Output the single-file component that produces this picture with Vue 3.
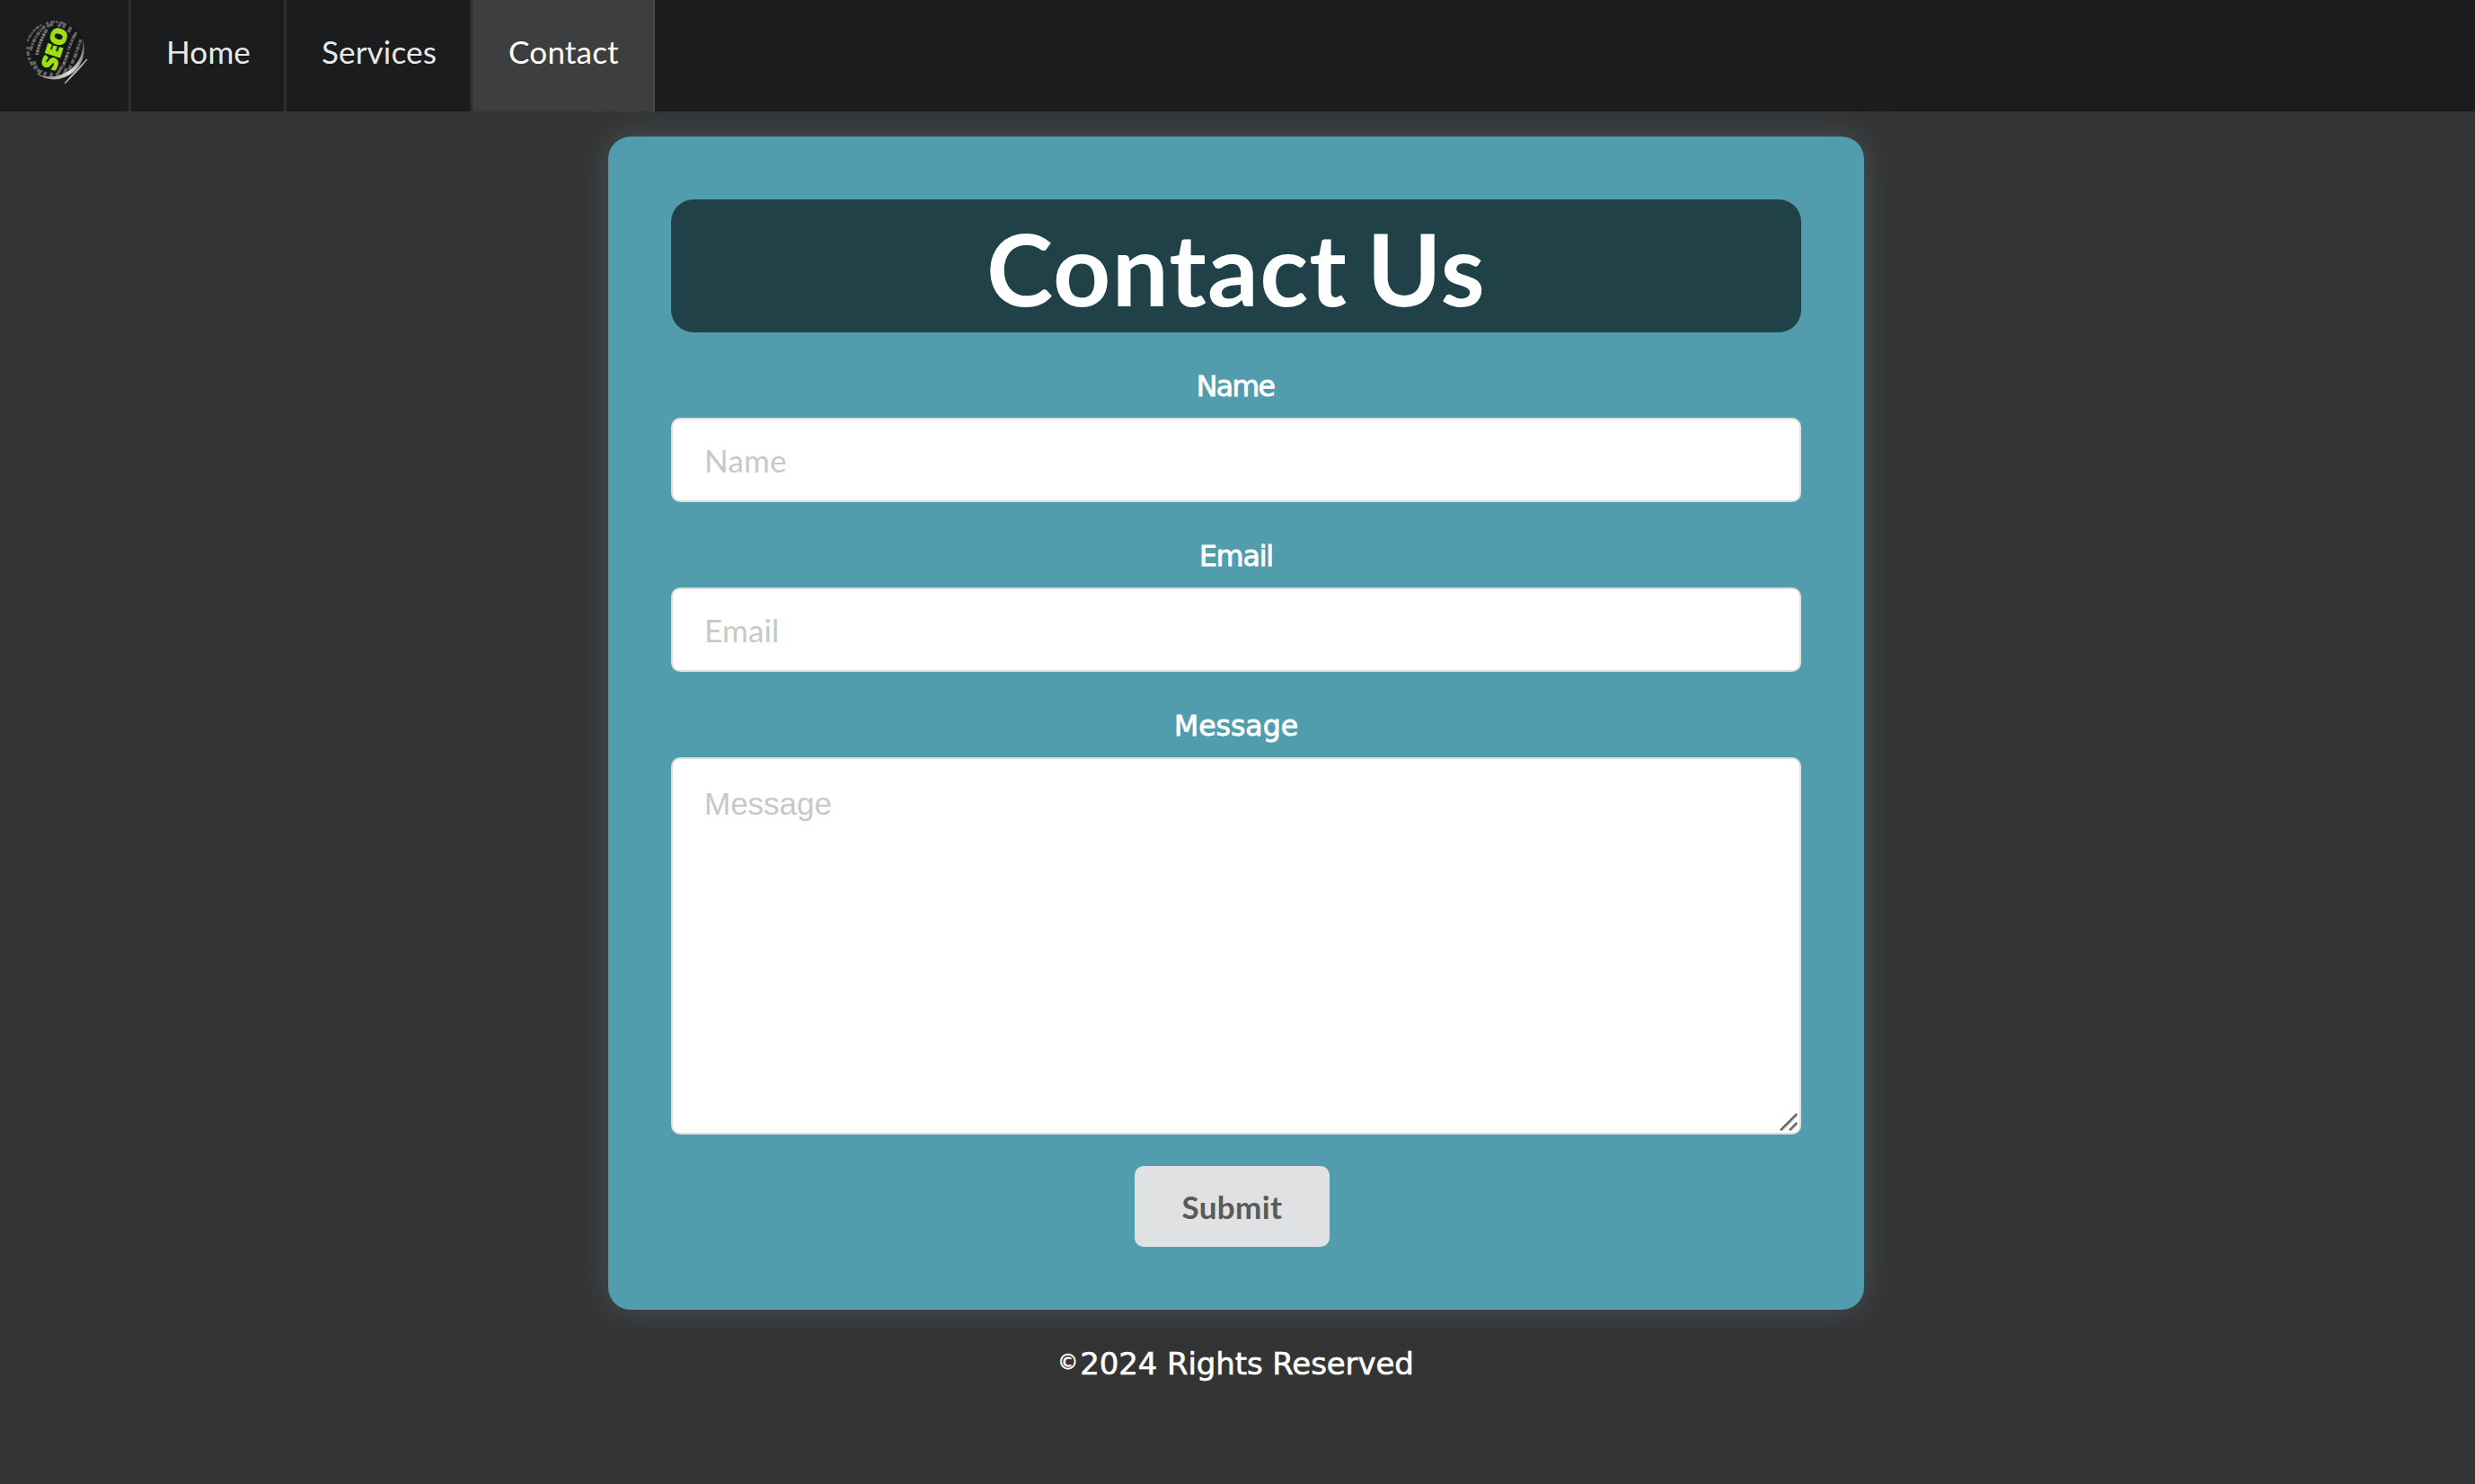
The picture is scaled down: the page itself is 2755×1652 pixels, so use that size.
<script setup>
import { ref } from 'vue'

const links = ['Home', 'Services', 'Contact']
const active = ref('Contact')
const name = ref('')
const email = ref('')
const message = ref('')
</script>

<template>
  <div class="page">
    <nav class="menu">
      <a class="brand">
        <svg width="76" height="76" viewBox="0 0 76 76" aria-label="SEO">
          <defs>
            <linearGradient id="rim" x1="0" y1="1" x2="1" y2="0.2">
              <stop offset="0" stop-color="#777" />
              <stop offset="0.5" stop-color="#ddd" />
              <stop offset="1" stop-color="#777" />
            </linearGradient>
            <clipPath id="globe"><circle cx="36" cy="34" r="33" /></clipPath>
          </defs>
          <g clip-path="url(#globe)">
            <circle cx="36" cy="34" r="33" fill="#17181a" />
            <g fill="none" stroke="#8b8b8b" stroke-width="3.4" opacity="0.65">
              <path d="M5 24Q10 12 21 5" stroke-dasharray="3 1 5 1 2 1" />
              <path d="M9 34Q13 18 25 7" stroke-dasharray="5 1 2 1" />
              <path d="M16 39Q19 24 27 11" stroke-dasharray="2 .7 3 .8" stroke="#b5b5b5" />
              <path d="M6 30Q5 45 15 55" stroke-dasharray="3 2 5 2" />
              <path d="M13 46Q14 53 19 58" stroke-dasharray="4 1" />
              <path d="M26 4Q36 0 47 4" stroke-dasharray="3 2 5 1" />
              <path d="M27 7L34 5M43 3L40 8M48 4L45 9M54 8L51 14M60 14L56 21" />
              <path d="M57 18L51 34" stroke-dasharray="3 1" />
              <path d="M65 22L58 42" stroke-dasharray="4 1 2 1" />
              <path d="M51 36L45 52" stroke-dasharray="2 1 4 1" stroke="#aaa" />
              <path d="M60 38L51 57" stroke-dasharray="5 2" />
              <path d="M44 52L38 62M21 56L18 61M26 58L24 63M33 59L31 64M49 54L46 61" />
            </g>
          </g>
          <path d="M15 60Q34 68 51 57Q69 45 67 22Q73 43 57 58Q37 74 15 60Z" fill="url(#rim)" />
          <path d="M47 71Q56 57 72 44Q61 60 47 71Z" fill="#7c7d7e" />
          <path d="M47 71L72 44" stroke="#bbb" stroke-width="1.2" />
          <text class="logo-text" transform="translate(36.5 57.5) rotate(-72)" textLength="48" lengthAdjust="spacingAndGlyphs">SEO</text>
        </svg>
      </a>
      <a
        v-for="link in links"
        :key="link"
        class="item"
        :class="[link.toLowerCase(), { active: link === active }]"
        @click="active = link"
      >{{ link }}</a>
    </nav>

    <form class="card" @submit.prevent>
      <h1>Contact Us</h1>
      <label class="l-name" for="name">Name</label>
      <input id="name" v-model="name" type="text" placeholder="Name">
      <label class="l-email" for="email">Email</label>
      <input id="email" v-model="email" type="email" placeholder="Email">
      <label class="l-message" for="message">Message</label>
      <div class="area">
        <textarea id="message" v-model="message" placeholder="Message"></textarea>
        <svg class="grip" width="22" height="22" viewBox="0 0 22 22">
          <path d="M3.5 20.5L20.5 3.5M13.5 20.5L20.5 13.5" stroke="#c8c8c8" stroke-width="2" />
          <path d="M2.5 19.5L19.5 2.5M12.5 19.5L19.5 12.5" stroke="#636363" stroke-width="2.4" stroke-linecap="round" />
        </svg>
      </div>
      <button type="submit">Submit</button>
    </form>

    <footer><span class="copy">©</span>2024 Rights Reserved</footer>
  </div>
</template>

<style>
body {
  margin: 0;
  background: #343434;
}
</style>

<style scoped>
* {
  box-sizing: border-box;
}
.page {
  min-height: 1652px;
  background: #343434;
  font-family: Lato, sans-serif;
  font-size: 35px;
}
.menu {
  position: relative;
  z-index: 1;
  display: flex;
  height: 124px;
  background: #1b1c1d;
}
.brand {
  width: 146px;
  padding: 22px 0 0 25px;
  border-right: 3px solid #2d2e2f;
}
.brand svg {
  display: block;
}
.logo-text {
  font: 900 24px "Open Sans", sans-serif;
  fill: #a0e010;
  stroke: #a0e010;
  stroke-width: 0.8px;
}
.item {
  height: 124px;
  padding-left: 2px;
  border-right: 3px solid #2d2e2f;
  color: #e8e8e8;
  letter-spacing: 0.2px;
  line-height: 115px;
  text-align: center;
  cursor: pointer;
}
.home {
  width: 173px;
}
.services {
  width: 207px;
}
.contact {
  width: 203px;
}
.item.active {
  background: #3d3e3f;
  border-right: 2px solid #4a4b4c;
  color: #fff;
}
.card {
  display: flex;
  flex-direction: column;
  width: 1398px;
  height: 1306px;
  margin: 28px 0 0 677px;
  padding: 70px;
  border-radius: 25px;
  background: #519dae;
  box-shadow: 0 0 36px rgba(80, 96, 108, 0.7);
}
h1 {
  height: 148px;
  margin: 0;
  border-radius: 25px;
  background: #214148;
  color: #fff;
  font-size: 112px;
  font-weight: 700;
  letter-spacing: 1.2px;
  line-height: 151px;
  text-align: center;
  word-spacing: -7px;
}
label {
  height: 95px;
  color: #fff;
  font-family: "DejaVu Sans", sans-serif;
  font-size: 31.5px;
  line-height: 120px;
  text-align: center;
  -webkit-text-stroke: 0.9px #fff;
}
.l-name {
  padding-right: 2px;
  letter-spacing: -1.6px;
}
.l-email {
  letter-spacing: -1.1px;
}
input,
textarea {
  display: block;
  width: 1258px;
  margin: 0;
  border: 2px solid #dedede;
  border-radius: 10px;
  outline: none;
  background: #fff;
  color: #222;
}
input {
  height: 94px;
  padding: 0 35px;
  font: 35px Lato, sans-serif;
  letter-spacing: 0.2px;
}
textarea {
  height: 420px;
  padding: 27px 35px;
  font: 35px/45px "Liberation Sans", Arial, sans-serif;
  resize: none;
}
::placeholder {
  color: #c8c8c8;
  opacity: 1;
}
.area {
  position: relative;
}
.grip {
  position: absolute;
  right: 3px;
  bottom: 3px;
}
button {
  width: 217px;
  height: 90px;
  margin: 35px 0 0 516px;
  padding: 0;
  border: 0;
  border-radius: 10px;
  background: #e0e1e2;
  color: #5a5a5a;
  font: 700 35px Lato, sans-serif;
  letter-spacing: 0.4px;
}
footer {
  margin-top: 38px;
  padding-right: 4px;
  color: #fff;
  font-family: "DejaVu Sans", sans-serif;
  font-size: 34px;
  letter-spacing: -0.1px;
  line-height: 44px;
  text-align: center;
  -webkit-text-stroke: 0.6px #fff;
}
.copy {
  margin-right: 2px;
  font-size: 23px;
  line-height: 1;
  vertical-align: 6px;
}
</style>
